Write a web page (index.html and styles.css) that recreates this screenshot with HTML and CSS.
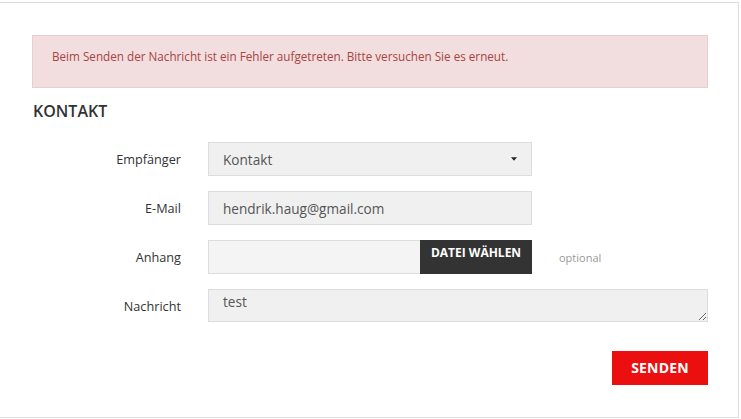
FILE: index.html
```html
<!DOCTYPE html>
<html lang="de">
<head>
<meta charset="utf-8">
<title>Kontakt</title>
<link rel="stylesheet" href="styles.css">
</head>
<body>
<div class="card">
  <div class="alert">Beim Senden der Nachricht ist ein Fehler aufgetreten. Bitte versuchen Sie es erneut.</div>
  <h2 class="title">Kontakt</h2>
  <form class="form">
    <label class="label">Empfänger</label>
    <div class="field select">
      <span>Kontakt</span>
      <svg class="caret" width="7" height="4" viewBox="0 0 7 4"><path d="M0 0h7L3.5 4z" fill="#222"/></svg>
    </div>
    <span></span>

    <label class="label">E-Mail</label>
    <input class="field" type="text" value="hendrik.haug@gmail.com">
    <span></span>

    <label class="label">Anhang</label>
    <div class="file">
      <div class="file-input"></div>
      <div class="file-btn">Datei wählen</div>
    </div>
    <span class="hint">optional</span>

    <label class="label">Nachricht</label>
    <textarea class="field area">test</textarea>
  </form>
  <div class="actions">
    <button class="submit" type="button">Senden</button>
  </div>
</div>
</body>
</html>
```

FILE: styles.css
```css
html, body {
  margin: 0;
  padding: 0;
  background: #fff;
  font-family: "Open Sans", "Liberation Sans", sans-serif;
  color: #333;
}

.card {
  box-sizing: border-box;
  margin: 2px 0 0 -1px;
  width: 740px;
  border: 1px solid #dedede;
  background: #fff;
  padding: 32px 30px 32px 32px;
}

.alert {
  background: #f2dede;
  border: 1px solid #ebccd1;
  color: #a94442;
  font-size: 11.7px;
  line-height: 16px;
  padding: 12px 19px 23px;
}

.title {
  margin: 12px 0 20px 1px;
  font-size: 16px;
  line-height: 22px;
  font-weight: 600;
  text-transform: uppercase;
  color: #333;
}

.form {
  display: grid;
  grid-template-columns: 149px 324px 1fr;
  column-gap: 27px;
  row-gap: 15px;
  align-items: center;
}

.label {
  text-align: right;
  font-size: 12.7px;
  line-height: 34px;
  color: #333;
}

.field {
  box-sizing: border-box;
  height: 34px;
  width: 324px;
  margin: 0;
  border: 1px solid #dddddd;
  background: #f0f0f0;
  font-family: "Open Sans", "Liberation Sans", sans-serif;
  font-size: 13.6px;
  color: #555;
  padding: 0 14px;
  outline: none;
  border-radius: 0;
}

.select {
  display: flex;
  align-items: center;
  justify-content: space-between;
  padding-right: 14px;
}

.caret {
  display: block;
  width: 6px;
  height: 4px;
}

.file {
  display: flex;
  height: 34px;
  width: 324px;
}

.file-input {
  flex: 1;
  box-sizing: border-box;
  border: 1px solid #dddddd;
  border-right: 0;
  background: #f4f4f4;
}

.file-btn {
  width: 112px;
  box-sizing: border-box;
  background: #333333;
  color: #fff;
  font-size: 12px;
  font-weight: 700;
  line-height: 16px;
  padding-top: 5px;
  text-align: center;
  text-transform: uppercase;
}

.hint {
  font-size: 11px;
  color: #999;
}

.area {
  display: block;
  grid-column: 2 / 4;
  width: 100%;
  height: 33px;
  padding: 2px 14px 0;
  line-height: 20px;
  resize: both;
  align-self: start;
}

.actions {
  display: flex;
  justify-content: flex-end;
  margin-top: 28px;
}

.submit {
  width: 96px;
  height: 34px;
  border: 0;
  border-radius: 0;
  background: #ec0f10;
  color: #fff;
  font-family: "Open Sans", "Liberation Sans", sans-serif;
  font-size: 14px;
  font-weight: 700;
  line-height: 34px;
  text-transform: uppercase;
  padding: 0 0 2px;
  letter-spacing: 0.2px;
}
```
